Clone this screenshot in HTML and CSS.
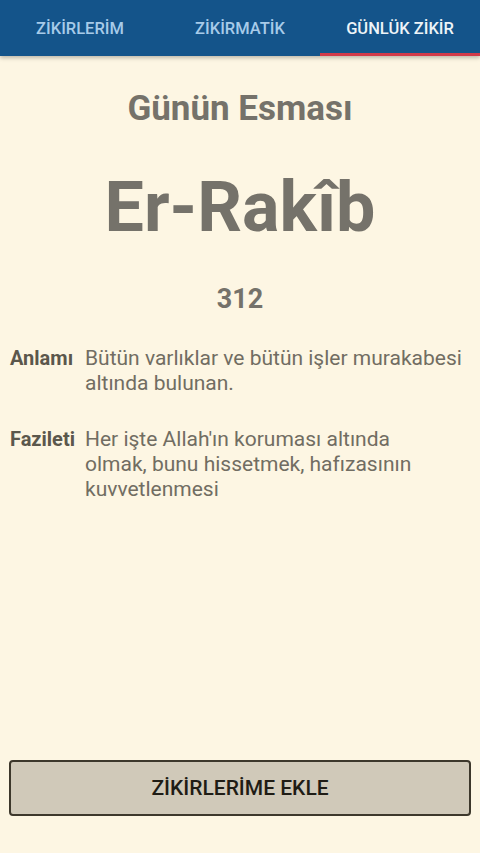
FILE: index.html
```html
<!DOCTYPE html>
<html lang="tr">
<head>
<meta charset="utf-8">
<meta name="viewport" content="width=480">
<link rel="stylesheet" href="styles.css">
</head>
<body>
<div class="app">
  <nav class="tabs">
    <div class="tab">ZİKİRLERİM</div>
    <div class="tab">ZİKİRMATİK</div>
    <div class="tab active">GÜNLÜK ZİKİR</div>
  </nav>
  <main class="content">
    <h1 class="title">Günün Esması</h1>
    <div class="name">Er-Rakîb</div>
    <div class="number">312</div>
    <div class="details">
      <div class="label">Anlamı</div>
      <div class="text">Bütün varlıklar ve bütün işler murakabesi altında bulunan.</div>
      <div class="label">Fazileti</div>
      <div class="text">Her işte Allah'ın koruması altında<br>olmak, bunu hissetmek, hafızasının<br>kuvvetlenmesi</div>
    </div>
  </main>
  <div class="footer">
    <button class="add">ZİKİRLERİME EKLE</button>
  </div>
</div>
</body>
</html>
```

FILE: styles.css
```css
* { box-sizing: border-box; }
html, body { margin: 0; padding: 0; }
body {
  background: #fdf6e3;
  font-family: Roboto, "Noto Sans", sans-serif;
  width: 480px;
  height: 853px;
  overflow: hidden;
}
.app {
  display: flex;
  flex-direction: column;
  height: 853px;
}
.tabs {
  display: flex;
  height: 56px;
  background: #14548a;
  box-shadow: 0 2px 4px rgba(0,0,0,0.25);
  position: relative;
  z-index: 1;
}
.tab {
  flex: 1;
  display: flex;
  align-items: center;
  justify-content: center;
  color: #a7cbe9;
  font-size: 16.5px;
  font-weight: 500;
  border-bottom: 3px solid transparent;
  padding-top: 3px;
}
.tab.active {
  color: #eef4f8;
  border-bottom-color: #d23a4a;
}
.content {
  flex: 1;
  display: flex;
  flex-direction: column;
  align-items: center;
  color: #75726a;
}
.title {
  margin: 32px 0 0;
  font-size: 35px;
  font-weight: 700;
  line-height: 41px;
}
.name {
  font-size: 70px;
  font-weight: 700;
  line-height: 82px;
  margin-top: 37px;
}
.number {
  font-size: 27px;
  font-weight: 700;
  line-height: 32px;
  margin-top: 35px;
}
.details {
  align-self: stretch;
  display: grid;
  grid-template-columns: auto 1fr;
  column-gap: 10px;
  row-gap: 31px;
  padding: 0 10px;
  margin-top: 31px;
  font-size: 21px;
  line-height: 25px;
}
.label {
  font-size: 20px;
  font-weight: 700;
  color: #5b574c;
}
.text {
  color: #716d62;
}
.footer {
  padding: 0 9px 37px;
}
.add {
  width: 100%;
  height: 56px;
  background: #d0c9b9;
  border: 2px solid #3d382c;
  border-radius: 4px;
  font-family: Roboto, "Noto Sans", sans-serif;
  font-size: 21px;
  font-weight: 500;
  color: #1f1c15;
  cursor: pointer;
}
```
